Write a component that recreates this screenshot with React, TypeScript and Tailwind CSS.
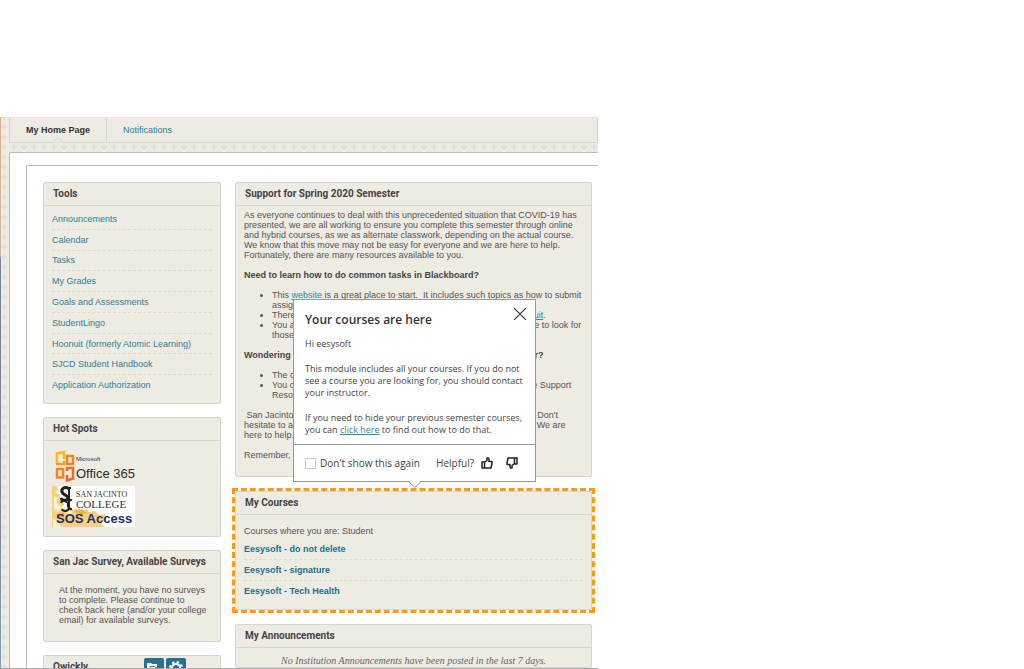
import type { ReactNode } from "react";
import { FiX } from "react-icons/fi";

const TOOLS = [
  "Announcements",
  "Calendar",
  "Tasks",
  "My Grades",
  "Goals and Assessments",
  "StudentLingo",
  "Hoonuit (formerly Atomic Learning)",
  "SJCD Student Handbook",
  "Application Authorization",
];

const COURSES = ["Eesysoft - do not delete", "Eesysoft - signature", "Eesysoft - Tech Health"];

function Card({
  title,
  className = "",
  children,
}: {
  title: string;
  className?: string;
  children: ReactNode;
}) {
  return (
    <section className={`rounded-[2px] border border-[#d5d6cc] bg-[#eeebe3] ${className}`}>
      <h2 className="flex h-[23px] items-center border-b border-[#d5d6cc] px-[9px] font-[Roboto,sans-serif] text-[10px] leading-3 font-bold whitespace-nowrap text-[#444]">
        {title}
      </h2>
      {children}
    </section>
  );
}

function Backdrop() {
  return (
    <svg className="absolute inset-0 h-full w-full" aria-hidden="true">
      <defs>
        <pattern id="crosses" x="-1" y="5" width="10" height="10" patternUnits="userSpaceOnUse">
          <path d="M5 2v6M2 5h6" stroke="#e3e1d7" strokeWidth="2" />
        </pattern>
        <linearGradient id="photo" x1="0" y1="0" x2="0" y2="1">
          <stop offset="0" stopColor="#dfae8b" />
          <stop offset="0.25" stopColor="#cbb9a5" />
          <stop offset="0.26" stopColor="#74809f" />
          <stop offset="0.7" stopColor="#7d8193" />
          <stop offset="1" stopColor="#7f9fbd" />
        </linearGradient>
      </defs>
      <rect width="100%" height="100%" fill="#eeebe3" />
      <rect width="100%" height="100%" fill="url(#crosses)" />
      <rect width="1" height="100%" fill="url(#photo)" />
    </svg>
  );
}

function OfficeLogo() {
  return (
    <svg width="84" height="34" viewBox="0 0 84 34" role="img" aria-label="Microsoft Office 365">
      <g fill="none">
        <path d="M5 14V3.500l7-1.500v7" stroke="#fdb813" strokeWidth="2.500" />
        <path d="M4 14h8v-3" stroke="#f99d1c" strokeWidth="2.500" />
        <path d="M15 14V6h6v8z" stroke="#f58220" strokeWidth="2.500" />
        <path d="M5 19h6v8.500H5z" stroke="#f58220" strokeWidth="2.500" />
        <path d="M15 21v-3h6v10.500l-6 2V25" stroke="#f26a21" strokeWidth="2.500" />
      </g>
      <text x="24" y="11" fontSize="6" fill="#333" fontFamily="Liberation Sans, sans-serif">
        Microsoft
      </text>
      <text x="24" y="28" fontSize="13" fill="#2b2b2b" fontFamily="Liberation Sans, sans-serif">
        Office 365
      </text>
    </svg>
  );
}

function CollegeLogo() {
  return (
    <svg width="83" height="41" viewBox="0 0 83 41" role="img" aria-label="San Jacinto College SOS Access">
      <rect width="83" height="41" fill="#fff" />
      <path
        d="M0 0h5l1 4-3 2 5 3-1 5 4-1 1 6-4 3 6 1 3-3 4 4 5-2 2 4 6-3 3 3 6-1 4 4 6-1 1 6-5 2 3 5H0z"
        fill="#fbcf80"
      />
      <path d="M2 10l4 2-2 4 5 5-3 5-4-3zM14 24l5 1 2 5-6-1zM1 33l5 2 3 6H1z" fill="#fff0d2" />
      <path d="M22 25l8-2 5 4-6 3zM4 28l7-2 2 4-6 2z" fill="#f9b03c" />
      <path
        d="M17 3c-3-3-8-1-7 3 1 3 6 3 7 7M9 12c1 3 6 3 7 0"
        fill="none"
        stroke="#26221f"
        strokeWidth="3"
      />
      <path
        d="M14 2h5M17 2v19c0 5-6 5-7 2M20 14c-5-1-6 10 0 9M9 17c1-3 5-3 6 0"
        fill="none"
        stroke="#26221f"
        strokeWidth="2"
      />
      <text x="24" y="11" fontSize="8" fill="#333" fontFamily="Liberation Serif, serif">
        SAN JACINTO
      </text>
      <text x="24" y="22" fontSize="11" fill="#333" fontFamily="Liberation Serif, serif">
        COLLEGE
      </text>
      <text x="4" y="37" fontSize="13" fontWeight="bold" fill="#16306b" fontFamily="Liberation Sans, sans-serif">
        SOS Access
      </text>
    </svg>
  );
}

function Thumb({ className = "" }: { className?: string }) {
  return (
    <svg
      className={className}
      width="12"
      height="12"
      viewBox="0 0 12 12"
      fill="none"
      stroke="#222"
      strokeWidth="1.500"
      strokeLinejoin="round"
      aria-hidden="true"
    >
      <path d="M1 5h2.500v6H1zM3.500 5.500L6 3.500V1h1.500l.5 1v2.500h3V6l-1 5H3.500z" />
    </svg>
  );
}

function HelpPopup() {
  return (
    <div
      role="dialog"
      aria-labelledby="help-title"
      className="absolute right-14 bottom-full mb-[9px] w-[243px] border border-[#999] bg-white font-['Open_Sans',sans-serif] text-[#444]"
    >
      <div className="px-[11px] pt-3 pb-2">
        <div className="flex h-4 items-start justify-between">
          <h2 id="help-title" className="text-[12px] leading-4 font-semibold text-[#333]">
            Your courses are here
          </h2>
          <button type="button" aria-label="Close" className="-mt-[9px] -mr-[7px]">
            <FiX size={22} strokeWidth={1.2} />
          </button>
        </div>
        <div className="mt-[10px] flex flex-col gap-[13px] text-[9px] leading-3">
          <p>Hi eesysoft</p>
          <p>
            This module includes all your courses. If you do not
            <br />
            see a course you are looking for, you should contact
            <br />
            your instructor.
          </p>
          <p>
            If you need to hide your previous semester courses,
            <br />
            you can{" "}
            <a href="#hide" className="text-[#2d8aa5] underline">
              click here
            </a>{" "}
            to find out how to do that.
          </p>
        </div>
      </div>
      <div className="flex h-[37px] items-center border-t border-[#999] pr-[5px] pl-[11px] text-[10px]">
        <input
          id="dont-show"
          type="checkbox"
          className="size-[11px] appearance-none border border-[#ccc] bg-white"
        />
        <label htmlFor="dont-show" className="ml-1">
          Don't show this again
        </label>
        <span className="mr-[7px] ml-auto">Helpful?</span>
        <button type="button" aria-label="Yes, helpful" className="mr-[13px]">
          <Thumb />
        </button>
        <button type="button" aria-label="Not helpful" className="mr-3">
          <Thumb className="rotate-180" />
        </button>
      </div>
      <svg className="absolute top-full left-1/2 -translate-x-1/2" width="15" height="8" viewBox="0 0 15 8">
        <path d="M1 -1h13L7.500 6z" fill="#fff" />
        <path d="M1 0.500l6.500 6 6.500-6" fill="none" stroke="#999" />
      </svg>
    </div>
  );
}

function SupportText() {
  return (
    <div className="px-[8px] pt-1 pb-4 whitespace-nowrap">
      <p>
        As everyone continues to deal with this unprecedented situation that COVID-19 has
        <br />
        presented, we are all working to ensure you complete this semester through online
        <br />
        and hybrid courses, as we as alternate classwork, depending on the actual course.
        <br />
        We know that this move may not be easy for everyone and we are here to help.
        <br />
        Fortunately, there are many resources available to you.
      </p>
      <h3 className="mt-[10px] font-bold text-[#444]">Need to learn how to do common tasks in Blackboard?</h3>
      <ul className="mt-[10px] list-disc pl-7">
        <li>
          This{" "}
          <a href="#website" className="text-[#2d8aa5] underline">
            website
          </a>{" "}
          is a great place to start.&nbsp; It includes such topics as how to submit
          <br />
          assignments and take tests.
        </li>
        <li>
          There are also many short video tutorials available to you in{" "}
          <a href="#hoonuit" className="text-[#2d8aa5] underline">
            Hoonuit
          </a>
          .
        </li>
        <li>
          You also have the Student Help tab within Blackboard as one place to look for
          <br />
          those resources.
        </li>
      </ul>
      <h3 className="mt-[10px] font-bold text-[#444]">
        Wondering where you can find help during the Spring 2020 semester?
      </h3>
      <ul className="mt-[10px] list-disc pl-7">
        <li>The college help desk is open.</li>
        <li>
          You can find tutoring and counseling services online in the Remote Support
          <br />
          Resources page.
        </li>
      </ul>
      <p className="mt-[10px]">
        &nbsp;San Jacinto College is fully committed to helping all of our new students. Don't
        <br />
        hesitate to ask your instructors or your advisor about whatever you need. We are
        <br />
        here to help.
      </p>
      <p className="mt-[10px]">Remember, we are all in this together.</p>
    </div>
  );
}

export default function App() {
  return (
    <div className="h-screen overflow-hidden bg-white pt-[117px] font-['Liberation_Sans',Arial,sans-serif] text-[9px] leading-[10px] text-[#555]">
      <div className="relative flex h-full w-full max-w-[598px] flex-col border-b border-[#aaa] pl-[9px]">
        <Backdrop />
        <nav className="relative mb-[9px] flex h-[26px] shrink-0 border border-[#d5d6cc] border-t-[#e6e4dc] bg-[#eeebe3]">
          <a
            href="#home"
            className="relative flex w-[97px] items-center justify-center border-r border-[#d5d6cc] pb-px font-bold text-[#333]"
          >
            My Home Page
            <svg className="absolute -bottom-px left-1/2 -translate-x-1/2" width="12" height="6" viewBox="0 0 12 6">
              <path d="M0 5.500L6 0.500l6 5" fill="#eeebe3" stroke="#d5d6cc" />
            </svg>
          </a>
          <a href="#notifications" className="flex items-center px-4 pb-px text-[#2d7f98]">
            Notifications
          </a>
        </nav>
        <div className="relative min-h-0 flex-1 overflow-hidden rounded-tl-[2px] border-t border-l border-[#bbb] bg-white pt-3 pl-4">
          <div className="flex h-full items-start gap-[14px] rounded-tl-[2px] border-t border-l border-[#bbb] pt-4 pr-[6px] pl-4">
            <aside className="flex w-[178px] shrink-0 flex-col gap-[13px]">
              <Card title="Tools" className="h-[222px]">
                <ul className="mx-2 mt-[3px] flex h-[186px] flex-col">
                  {TOOLS.map((tool) => (
                    <li
                      key={tool}
                      className="flex flex-1 items-center border-b border-dashed border-[#dcdacf] last:border-0"
                    >
                      <a href="#tool" className="text-[#2d7f98]">
                        {tool}
                      </a>
                    </li>
                  ))}
                </ul>
              </Card>
              <Card title="Hot Spots" className="h-[120px]">
                <div className="flex flex-col gap-[2px] px-2 pt-[9px]">
                  <a href="#office">
                    <OfficeLogo />
                  </a>
                  <a href="#sos">
                    <CollegeLogo />
                  </a>
                </div>
              </Card>
              <Card title="San Jac Survey, Available Surveys" className="h-[92px]">
                <p className="pt-[11px] pr-[13px] pl-[15px]">
                  At the moment, you have no surveys to complete. Please continue to check back here (and/or your
                  college email) for available surveys.
                </p>
              </Card>
              <Card title="Qwickly" className="relative">
                <div className="absolute top-[2px] right-[34px] flex gap-[2px]">
                  <button type="button" aria-label="Folders" className="rounded-[2px] bg-[#28708f] p-[3px]">
                    <svg width="14" height="14" viewBox="0 0 14 14">
                      <path d="M0 2h4l1 1h5v8H0z" fill="#fff" />
                      <path d="M3.500 5.500h4l1 1h5v7h-10z" fill="#fff" stroke="#28708f" />
                    </svg>
                  </button>
                  <button type="button" aria-label="Settings" className="rounded-[2px] bg-[#28708f] p-[3px]">
                    <svg width="14" height="14" viewBox="0 0 14 14" fill="none" stroke="#fff">
                      <circle cx="7" cy="7" r="4" strokeWidth="2" />
                      <circle cx="7" cy="7" r="6" strokeWidth="2" strokeDasharray="2.500 2.200" />
                    </svg>
                  </button>
                </div>
              </Card>
            </aside>
            <main className="flex min-w-0 flex-1 flex-col gap-[14px]">
              <Card title="Support for Spring 2020 Semester" className="h-[295px]">
                <SupportText />
              </Card>
              <div className="relative">
                <div className="pointer-events-none absolute -inset-[3px] border-3 border-dashed border-[#ff9a0a]" />
                <Card title="My Courses" className="h-[119px]">
                  <div className="px-2 pt-[11px]">
                    <p>Courses where you are: Student</p>
                    <ul className="mt-[3px] flex h-[62px] flex-col">
                      {COURSES.map((course) => (
                        <li
                          key={course}
                          className="flex flex-1 items-center border-b border-dashed border-[#dcdacf] last:border-0"
                        >
                          <a href="#course" className="font-bold text-[#20718c]">
                            {course}
                          </a>
                        </li>
                      ))}
                    </ul>
                  </div>
                </Card>
                <HelpPopup />
              </div>
              <Card title="My Announcements">
                <p className="pt-[7px] text-center font-['Liberation_Serif',serif] text-[10px] leading-3 text-[#666] italic">
                  No Institution Announcements have been posted in the last 7 days.
                </p>
              </Card>
            </main>
          </div>
        </div>
      </div>
    </div>
  );
}
